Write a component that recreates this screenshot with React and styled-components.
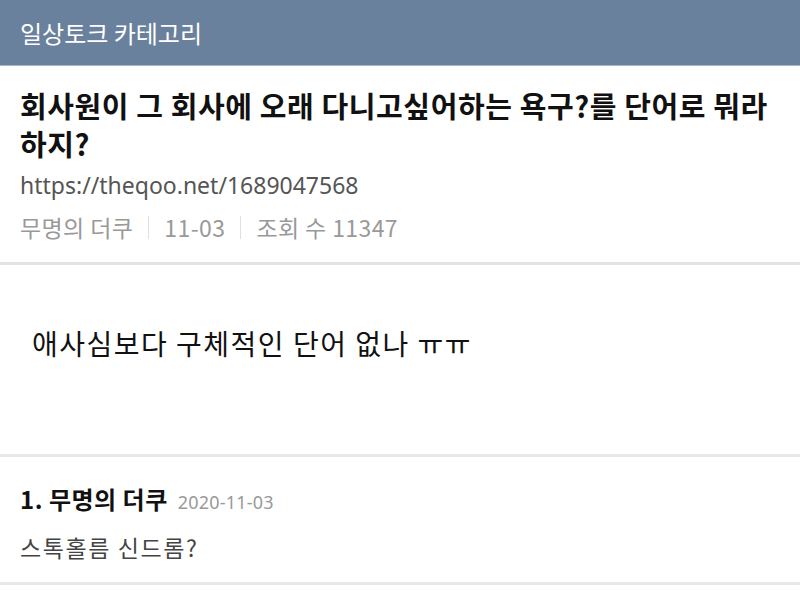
import styled, { createGlobalStyle } from "styled-components";

const Global = createGlobalStyle`
  html, body {
    margin: 0;
    padding: 0;
    background: #fff;
    font-family: "Noto Sans CJK KR", "Noto Sans", sans-serif;
  }
`;

const Page = styled.div`
  width: 800px;
  height: 592px;
  overflow: hidden;
  background: #fff;
`;

const Header = styled.div`
  height: 66px;
  background: #6a819d;
  display: flex;
  align-items: center;
  padding: 0 20px;
  color: #fff;
  font-size: 24px;
  border-bottom: 1px solid #a9b6c5;
  box-sizing: border-box;
`;

const PostHead = styled.div`
  padding: 20px 12px 19px 20px;
  border-bottom: 3px solid #e3e3e3;
`;

const Title = styled.h1`
  margin: 0;
  font-size: 29px;
  font-weight: 700;
  line-height: 38px;
  letter-spacing: 0.6px;
  word-break: keep-all;
  color: #111;
`;

const Url = styled.div`
  margin-top: 6px;
  font-size: 23px;
  color: #555;
  font-family: "Noto Sans", sans-serif;
  line-height: 34px;
`;

const Meta = styled.div`
  display: flex;
  align-items: center;
  margin-top: 9px;
  font-size: 23px;
  letter-spacing: 0.4px;
  color: #999;
  line-height: 32px;
`;

const Sep = styled.span`
  display: inline-block;
  width: 1px;
  height: 23px;
  background: #e0e0e0;
  margin: 0 15px;
`;

const Body = styled.div`
  height: 192px;
  box-sizing: border-box;
  padding: 60px 32px 0;
  font-size: 28px;
  letter-spacing: 1.5px;
  line-height: 36px;
  color: #111;
  border-bottom: 3px solid #e8e8e8;
`;

const Comment = styled.div`
  padding: 25px 20px 20px;
  border-bottom: 3px solid #e8e8e8;
`;

const CommentHead = styled.div`
  display: flex;
  align-items: baseline;
  gap: 10px;
  font-size: 24px;
  font-weight: 700;
  letter-spacing: 0.5px;
  color: #111;
  line-height: 34px;
`;

const Date = styled.span`
  font-size: 18px;
  font-weight: 400;
  letter-spacing: 0.2px;
  color: #999;
  font-family: "Noto Sans", sans-serif;
`;

const CommentText = styled.div`
  margin-top: 13px;
  font-size: 23px;
  letter-spacing: 1.6px;
  color: #444;
  line-height: 30px;
`;

export default function App() {
  return (
    <Page>
      <Global />
      <Header>일상토크 카테고리</Header>
      <PostHead>
        <Title>회사원이 그 회사에 오래 다니고싶어하는 욕구?를 단어로 뭐라 하지?</Title>
        <Url>https://theqoo.net/1689047568</Url>
        <Meta>
          무명의 더쿠<Sep />11-03<Sep />조회 수 11347
        </Meta>
      </PostHead>
      <Body>애사심보다 구체적인 단어 없나 ㅠㅠ</Body>
      <Comment>
        <CommentHead>
          <span>1. 무명의 더쿠</span>
          <Date>2020-11-03</Date>
        </CommentHead>
        <CommentText>스톡홀름 신드롬?</CommentText>
      </Comment>
    </Page>
  );
}
